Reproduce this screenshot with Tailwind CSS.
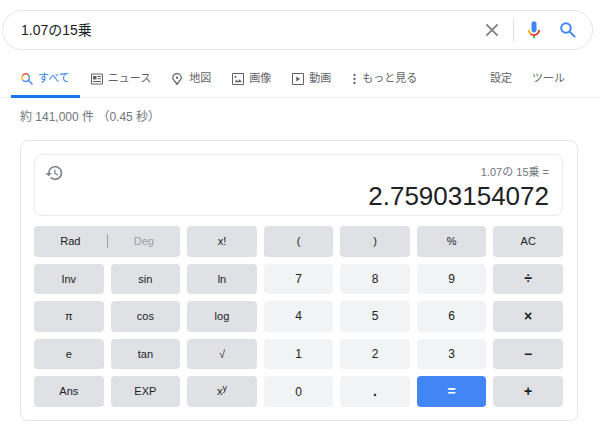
<!DOCTYPE html>
<html lang="ja">
<head>
<meta charset="UTF-8" />
<meta name="viewport" content="width=device-width, initial-scale=1.0" />
<title>1.07の15乗 - 検索</title>
<script src="https://cdn.jsdelivr.net/npm/@tailwindcss/browser@4"></script>
</head>

<body class="bg-white text-[#202124] font-['Liberation_Sans','Noto_Sans_CJK_JP',sans-serif] pt-[10px]">

<!-- Search box -->
<form role="search" class="ml-[2px] mr-[7px] h-10 flex items-center rounded-full border border-[#e4e5e8] pl-[18px] pr-[15px]">
  <input type="text" name="q" value="1.07の15乗" aria-label="検索" class="flex-1 min-w-0 text-[14px] outline-none">
  <button type="reset" aria-label="クリア" class="mr-3">
    <svg class="w-[18px] h-[18px]" viewBox="0 0 24 24" fill="none" stroke="#80868b" stroke-width="2.600"><path d="M4.500 4.500l15 15M19.500 4.500l-15 15"/></svg>
  </button>
  <span class="w-px h-6 bg-[#dfe1e5] mr-[10px]"></span>
  <button type="button" aria-label="音声検索" class="mr-[15px]">
    <svg class="w-5 h-5" viewBox="0 0 24 24">
      <path fill="#4285f4" d="M12 15c1.700 0 3-1.300 3-3V4.500c0-1.700-1.300-3-3-3s-3 1.300-3 3V12c0 1.700 1.300 3 3 3z"/>
      <path fill="#34a853" d="M11 18.500h2V22h-2z"/>
      <path fill="#fbbc05" d="M7 12H4.700c0 2 .800 3.800 2.200 5.100l1.600-1.600C7.560 14.630 7 13.380 7 12z"/>
      <path fill="#ea4335" d="M12 17c-1.380 0-2.630-.560-3.540-1.470L6.900 17.100A7.200 7.200 0 0 0 12 19.200c4 0 7.300-3.200 7.300-7.200H17c0 2.760-2.240 5-5 5z"/>
    </svg>
  </button>
  <button type="submit" aria-label="検索する">
    <svg class="w-[18px] h-[18px]" viewBox="0 0 24 24" fill="none" stroke="#4285f4" stroke-width="2.700"><circle cx="9.300" cy="9.300" r="6.300"/><path d="M13.800 13.800l7.700 7.700"/></svg>
  </button>
</form>

<!-- Tabs -->
<nav class="mt-[10px] h-[38px] flex border-b border-[#ebebeb] pl-[11px] pr-[35px] text-[11px] text-[#5f6368]">
  <div class="flex gap-px">
    <a href="#" class="-mb-px flex items-center gap-[5px] px-[10px] pt-[2px] border-b-3 border-[#1a73e8] text-[#2f7ff0]">
      <svg class="w-3 h-3" viewBox="0 0 24 24" fill="none" stroke-width="2.800">
        <path stroke="#ea4335" d="M2.800 5.500A7.500 7.500 0 0 1 14.600 3.700"/>
        <path stroke="#fbbc05" d="M2.800 5.500A7.500 7.500 0 0 0 4.200 14.800"/>
        <path stroke="#34a853" d="M14.600 3.700A7.500 7.500 0 0 1 16.800 9"/>
        <path stroke="#4285f4" d="M16.800 9A7.500 7.500 0 0 1 4.200 14.800M14.600 14.600L23 23"/>
      </svg>
      すべて
    </a>
    <a href="#" class="flex items-center gap-[5px] px-[10px]">
      <svg class="w-3 h-3" viewBox="0 0 24 24" fill="currentColor"><path fill-rule="evenodd" d="M2 1h20a2 2 0 0 1 2 2v18a2 2 0 0 1-2 2H2a2 2 0 0 1-2-2V3a2 2 0 0 1 2-2zm0 2v18h20V3zM4 6h7v7H4zM13 6h7v2h-7zM13 10.500h7v2h-7zM4 16h16v2H4z"/></svg>
      ニュース
    </a>
    <a href="#" class="flex items-center gap-[5px] px-[10px]">
      <svg class="w-3 h-3" viewBox="0 0 24 24" fill="none" stroke="currentColor" stroke-width="2.400"><path d="M10 1.200a8.500 8.500 0 0 0-8.500 8.500c0 5.300 6.500 7.300 8.500 13.300 2-6 8.500-8 8.500-13.300A8.500 8.500 0 0 0 10 1.200z"/><circle cx="10" cy="9.500" r="2.300" fill="currentColor" stroke="none"/></svg>
      地図
    </a>
    <a href="#" class="flex items-center gap-[5px] px-[10px]">
      <svg class="w-3 h-3" viewBox="0 0 24 24" fill="currentColor"><path fill-rule="evenodd" d="M2 0h20a2 2 0 0 1 2 2v20a2 2 0 0 1-2 2H2a2 2 0 0 1-2-2V2a2 2 0 0 1 2-2zm0 2v20h20V2zM5 18.500l4-5 3 3 3.500-4 4 6z"/><circle cx="7" cy="7.500" r="2"/></svg>
      画像
    </a>
    <a href="#" class="flex items-center gap-[5px] px-[10px]">
      <svg class="w-3 h-3" viewBox="0 0 24 24" fill="currentColor"><path fill-rule="evenodd" d="M2 0h20a2 2 0 0 1 2 2v20a2 2 0 0 1-2 2H2a2 2 0 0 1-2-2V2a2 2 0 0 1 2-2zm0 2v20h20V2zM8.500 7v10l8-5z"/></svg>
      動画
    </a>
    <button type="button" class="flex items-center gap-[5px] px-[10px]">
      <svg class="w-[5px] h-3" viewBox="0 0 10 24" fill="currentColor"><circle cx="5" cy="4" r="2.300"/><circle cx="5" cy="12" r="2.300"/><circle cx="5" cy="20" r="2.300"/></svg>
      もっと見る
    </button>
  </div>
  <div class="ml-auto flex gap-5">
    <button type="button">設定</button>
    <button type="button">ツール</button>
  </div>
</nav>

<p class="mt-[10px] ml-5 text-[12px] leading-[18px] text-[#70757a]">約 141,000 件 （0.45 秒）</p>

<!-- Calculator -->
<main class="mt-[14px] ml-5 mr-[22px] rounded-lg border border-[#e4e5e8] pl-[13px] pr-[14px] py-[13px]">
  <div class="h-[62px] flex justify-between rounded-lg border border-[#ebebeb] pl-[10px] pr-[13px]">
    <button type="button" aria-label="履歴" class="self-start mt-[9px]">
      <svg class="w-[18px] h-[18px]" viewBox="0 0 24 24" fill="#80868b"><path d="M13.500 2.500A9.500 9.500 0 0 0 4 12H.500l4.400 4.400L9.500 12H6.300c0-4 3.200-7.200 7.200-7.200s7.200 3.200 7.200 7.200-3.200 7.200-7.200 7.200c-2 0-3.800-.800-5.100-2.100l-1.600 1.600A9.500 9.500 0 1 0 13.500 2.500zM12.200 7.500v5.300l4.500 2.700.900-1.500-3.600-2.100V7.500z"/></svg>
    </button>
    <div class="text-right pt-[9px]">
      <div class="text-[11px] leading-4 text-[#70757a]">1.07の 15乗 =</div>
      <output class="block text-[26px] leading-8">2.75903154072</output>
    </div>
  </div>

  <div class="mt-[10px] h-[181px] grid grid-cols-7 grid-rows-5 gap-[7px] text-[11px]">
    <div class="col-span-2 flex items-center rounded bg-[#dfe1e5]">
      <button type="button" class="flex-1">Rad</button>
      <span class="w-px h-[14px] bg-[#9aa0a6]"></span>
      <button type="button" class="flex-1 text-[#9aa0a6]">Deg</button>
    </div>
    <button type="button" class="rounded bg-[#dfe1e5]">x!</button>
    <button type="button" class="rounded bg-[#dfe1e5]">(</button>
    <button type="button" class="rounded bg-[#dfe1e5]">)</button>
    <button type="button" class="rounded bg-[#dfe1e5]">%</button>
    <button type="button" class="rounded bg-[#dfe1e5]">AC</button>

    <button type="button" class="rounded bg-[#dfe1e5]">Inv</button>
    <button type="button" class="rounded bg-[#dfe1e5]">sin</button>
    <button type="button" class="rounded bg-[#dfe1e5]">ln</button>
    <button type="button" class="rounded bg-[#f1f3f4] text-[12px]">7</button>
    <button type="button" class="rounded bg-[#f1f3f4] text-[12px]">8</button>
    <button type="button" class="rounded bg-[#f1f3f4] text-[12px]">9</button>
    <button type="button" class="rounded bg-[#dfe1e5] text-[14px] font-bold">÷</button>

    <button type="button" class="rounded bg-[#dfe1e5]">π</button>
    <button type="button" class="rounded bg-[#dfe1e5]">cos</button>
    <button type="button" class="rounded bg-[#dfe1e5]">log</button>
    <button type="button" class="rounded bg-[#f1f3f4] text-[12px]">4</button>
    <button type="button" class="rounded bg-[#f1f3f4] text-[12px]">5</button>
    <button type="button" class="rounded bg-[#f1f3f4] text-[12px]">6</button>
    <button type="button" class="rounded bg-[#dfe1e5] text-[14px] font-bold">×</button>

    <button type="button" class="rounded bg-[#dfe1e5]">e</button>
    <button type="button" class="rounded bg-[#dfe1e5]">tan</button>
    <button type="button" class="rounded bg-[#dfe1e5]">√</button>
    <button type="button" class="rounded bg-[#f1f3f4] text-[12px]">1</button>
    <button type="button" class="rounded bg-[#f1f3f4] text-[12px]">2</button>
    <button type="button" class="rounded bg-[#f1f3f4] text-[12px]">3</button>
    <button type="button" class="rounded bg-[#dfe1e5] text-[14px] font-bold">−</button>

    <button type="button" class="rounded bg-[#dfe1e5]">Ans</button>
    <button type="button" class="rounded bg-[#dfe1e5]">EXP</button>
    <button type="button" class="rounded bg-[#dfe1e5]">x<sup class="text-[9px]">y</sup></button>
    <button type="button" class="rounded bg-[#f1f3f4] text-[12px]">0</button>
    <button type="button" class="rounded bg-[#f1f3f4] text-[14px] font-bold">.</button>
    <button type="button" class="rounded bg-[#4285f4] text-[14px] font-bold text-white">=</button>
    <button type="button" class="rounded bg-[#dfe1e5] text-[14px] font-bold">+</button>
  </div>
</main>

</body>
</html>
